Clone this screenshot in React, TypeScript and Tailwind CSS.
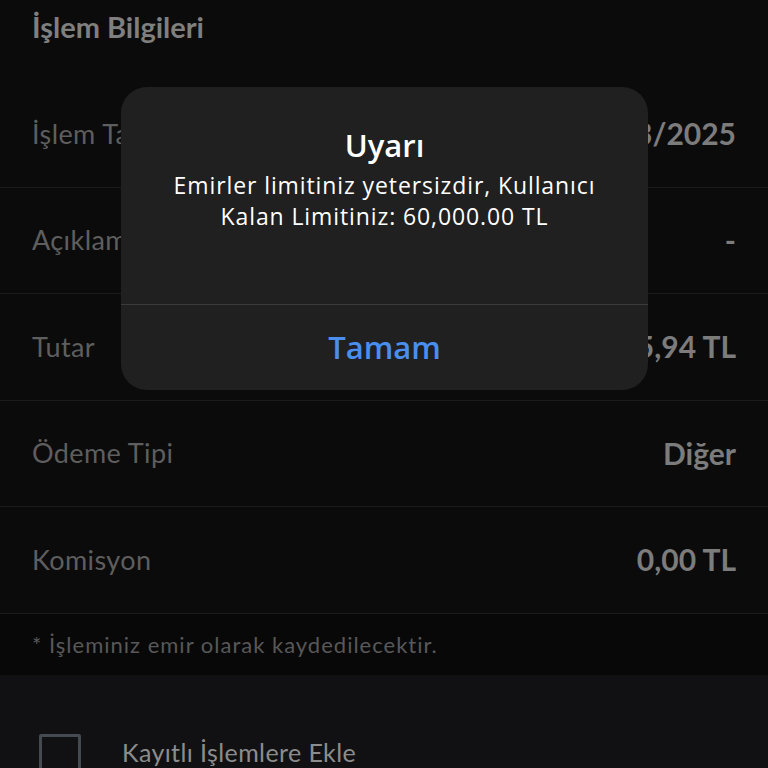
import React from 'react';

const rows = [
  { label: 'İşlem Tarihi', value: '12/03/2025' },
  { label: 'Açıklama', value: '-' },
  { label: 'Tutar', value: '12.345,94 TL' },
  { label: 'Ödeme Tipi', value: 'Diğer' },
  { label: 'Komisyon', value: '0,00 TL' },
];

const App = () => {
  return (
    <div className="relative w-[768px] h-[768px] overflow-hidden bg-[#0b0b0b] font-['Lato',sans-serif]">
      <div className="h-[81px] px-8 pt-[8px]">
        <h1 className="text-[29px] leading-[38px] font-bold text-[#7f7f7f]">İşlem Bilgileri</h1>
      </div>

      {rows.map((row) => (
        <div
          key={row.label}
          className="h-[106.5px] px-8 flex items-center justify-between border-b border-[#1b1b1b]"
        >
          <span className="text-[27px] tracking-[0.4px] text-[#5e5e5e]">{row.label}</span>
          <span className="text-[30px] font-bold text-[#7c7c7c]">{row.value}</span>
        </div>
      ))}

      <div className="h-[61px] px-8 flex items-center bg-[#080808]">
        <span className="text-[22px] tracking-[1px] text-[#585858]">* İşleminiz emir olarak kaydedilecektir.</span>
      </div>

      <div className="bg-[#111113] h-[200px] pt-[59px] pl-[39px] flex gap-[41px]">
        <div className="w-[42px] h-[42px] border-[3px] border-[#454950] rounded-[2px] shrink-0" />
        <span className="text-[25px] tracking-[0.4px] leading-[36px] text-[#8c8c8c]">Kayıtlı İşlemlere Ekle</span>
      </div>

      {/* alert */}
      <div className="absolute left-[121px] top-[87px] w-[527px] h-[303px] rounded-[26px] bg-[#202020] flex flex-col font-['Open_Sans',sans-serif]">
        <div className="h-[217px] pt-[38px] flex flex-col items-center text-white">
          <h2 className="text-[31px] leading-[40px] font-semibold">Uyarı</h2>
          <p className="mt-[5px] text-[23px] leading-[31px] tracking-[0.9px] text-center">
            Emirler limitiniz yetersizdir, Kullanıcı
            <br />
            Kalan Limitiniz: 60,000.00 TL
          </p>
        </div>
        <div className="h-px bg-[#3a3a3a]" />
        <div className="flex-1 flex items-center justify-center">
          <span className="text-[31px] font-semibold text-[#4a8eee]">Tamam</span>
        </div>
      </div>
    </div>
  );
};

export default App;
